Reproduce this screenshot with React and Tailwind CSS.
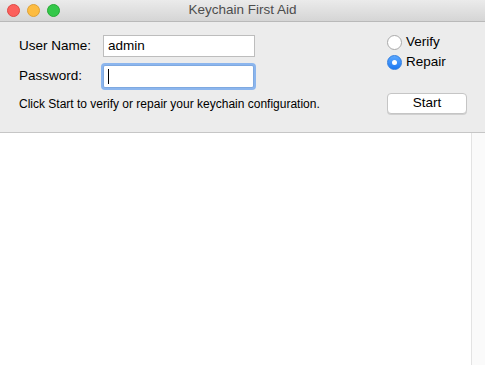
import React from "react";

const font = { fontFamily: '"Liberation Sans", Arial, sans-serif' };

const Light = ({ bg, border }) => (
  <span className={`w-[13px] h-[13px] rounded-full border ${bg} ${border}`} />
);

const Radio = ({ checked, label }) => (
  <label className="flex items-center h-[20px] gap-[4px] text-[13.5px] text-black">
    {checked ? (
      <span className="w-[15px] h-[15px] rounded-full bg-gradient-to-b from-[#5aa8ff] to-[#1a78f2] border border-[#2f7de0] flex items-center justify-center">
        <span className="w-[5px] h-[5px] rounded-full bg-white" />
      </span>
    ) : (
      <span className="w-[15px] h-[15px] rounded-full bg-white border border-[#a9a9a9]" />
    )}
    {label}
  </label>
);

export default function App() {
  return (
    <div className="w-[485px] h-[365px] flex flex-col bg-[#ececec] overflow-hidden" style={font}>
      {/* title bar */}
      <div className="relative h-[22px] shrink-0 flex items-center bg-gradient-to-b from-[#ebebeb] to-[#d5d5d5] border-b border-[#b9b9b9]">
        <div className="flex items-center gap-[7px] pl-[7px]">
          <Light bg="bg-[#fc605c]" border="border-[#de4a45]" />
          <Light bg="bg-[#fdbc40]" border="border-[#dea236]" />
          <Light bg="bg-[#34c84a]" border="border-[#27aa35]" />
        </div>
        <div className="absolute inset-0 flex items-center justify-center text-[13.5px] text-[#4d4d4d]">
          Keychain First Aid
        </div>
      </div>

      {/* controls */}
      <div className="h-[111px] shrink-0 flex justify-between pl-[19px] pr-[18px] border-b border-[#c6c6c6]">
        <div className="flex flex-col pt-[13px]">
          <div className="flex items-center h-[22px]">
            <span className="w-[84px] text-[13.5px] text-black">User Name:</span>
            <div className="w-[152px] h-[22px] bg-white border border-[#bdbdbd] flex items-center px-[4px] text-[13.5px] text-black">
              admin
            </div>
          </div>
          <div className="flex items-center h-[22px] mt-[8px]">
            <span className="w-[84px] text-[13.5px] text-black">Password:</span>
            <div className="w-[151px] h-[23px] bg-white border border-[#7fa9e0] shadow-[0_0_0_2px_#8cb6ee] rounded-[2px] flex items-center px-[4px]">
              <span className="w-px h-[15px] bg-black" />
            </div>
          </div>
          <div className="mt-[10px] text-[12px] text-black leading-[14px]">
            Click Start to verify or repair your keychain configuration.
          </div>
        </div>

        <div className="flex flex-col pt-[10px] w-[80px]">
          <Radio label="Verify" />
          <Radio checked label="Repair" />
          <button className="mt-[21px] w-[80px] h-[21px] bg-white border border-[#c5c5c5] rounded-[4px] text-[13.5px] text-black shadow-[0_1px_0_#d0d0d0] flex items-center justify-center">
            Start
          </button>
        </div>
      </div>

      {/* results area */}
      <div className="flex-1 flex bg-white">
        <div className="flex-1" />
        <div className="w-[14px] bg-[#fafafa] border-l border-[#e3e3e3]" />
      </div>
    </div>
  );
}
